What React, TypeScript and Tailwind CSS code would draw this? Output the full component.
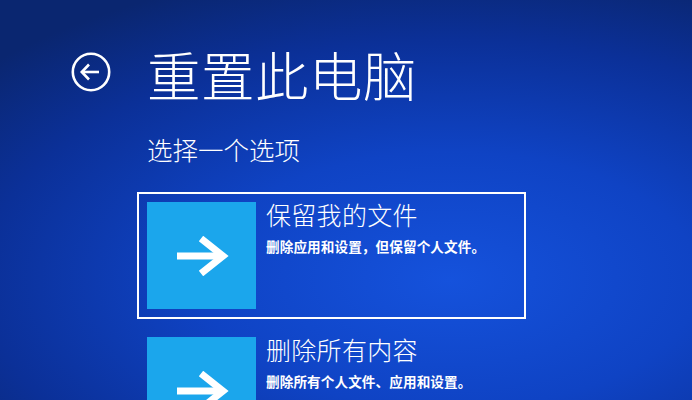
import React from "react";

const font = { fontFamily: '"Noto Sans CJK SC", "Noto Sans", sans-serif' };

function RightArrow() {
  return (
    <svg width="54" height="40" viewBox="0 0 54 40" fill="none">
      <path d="M2 20 H48" stroke="white" strokeWidth="7" />
      <path d="M26 2.5 L48 20 L26 37.5" stroke="white" strokeWidth="7" strokeLinejoin="miter" />
    </svg>
  );
}

function Option({ title, desc, selected }: { title: string; desc: string; selected?: boolean }) {
  return (
    <div
      className={`flex w-[389px] gap-[10px] p-[8px] border-2 ${
        selected ? "border-white" : "border-transparent"
      }`}
    >
      <div className="flex h-[107px] w-[109px] shrink-0 items-center justify-center bg-[#1ba6ec]">
        <RightArrow />
      </div>
      <div className="mt-[-3px] flex flex-col text-white">
        <div className="text-[25px] leading-[30px] font-light tracking-[0.3px]">{title}</div>
        <div className="mt-[8px] text-[13.6px] leading-[18px] font-semibold tracking-[0.1px]">{desc}</div>
      </div>
    </div>
  );
}

export default function App() {
  return (
    <div
      style={font}
      className="relative h-[400px] w-[692px] overflow-hidden bg-[radial-gradient(ellipse_90%_80%_at_65%_70%,#1552dc_0%,#0f43c4_40%,#0b3098_75%,#0a2670_100%)] text-white"
    >
      <div className="flex flex-col pl-[71px] pt-[46px]">
        <div className="flex items-center gap-[36px]">
          <svg width="40" height="40" viewBox="0 0 40 40" fill="none" className="mt-[-4px]">
            <circle cx="20" cy="20" r="18.2" stroke="white" strokeWidth="2.6" />
            <path d="M11 20 H28" stroke="white" strokeWidth="2.6" />
            <path d="M18 12.5 L10.8 20 L18 27.5" stroke="white" strokeWidth="2.6" />
          </svg>
          <div className="text-[53.5px] leading-[56px] font-light tracking-[0.5px]">重置此电脑</div>
        </div>
        <div className="ml-[76px] mt-[31px] text-[25.5px] leading-[32px] font-light">选择一个选项</div>
        <div className="ml-[66px] mt-[27px] flex flex-col gap-[8px]">
          <Option title="保留我的文件" desc="删除应用和设置，但保留个人文件。" selected />
          <Option title="删除所有内容" desc="删除所有个人文件、应用和设置。" />
        </div>
      </div>
    </div>
  );
}
